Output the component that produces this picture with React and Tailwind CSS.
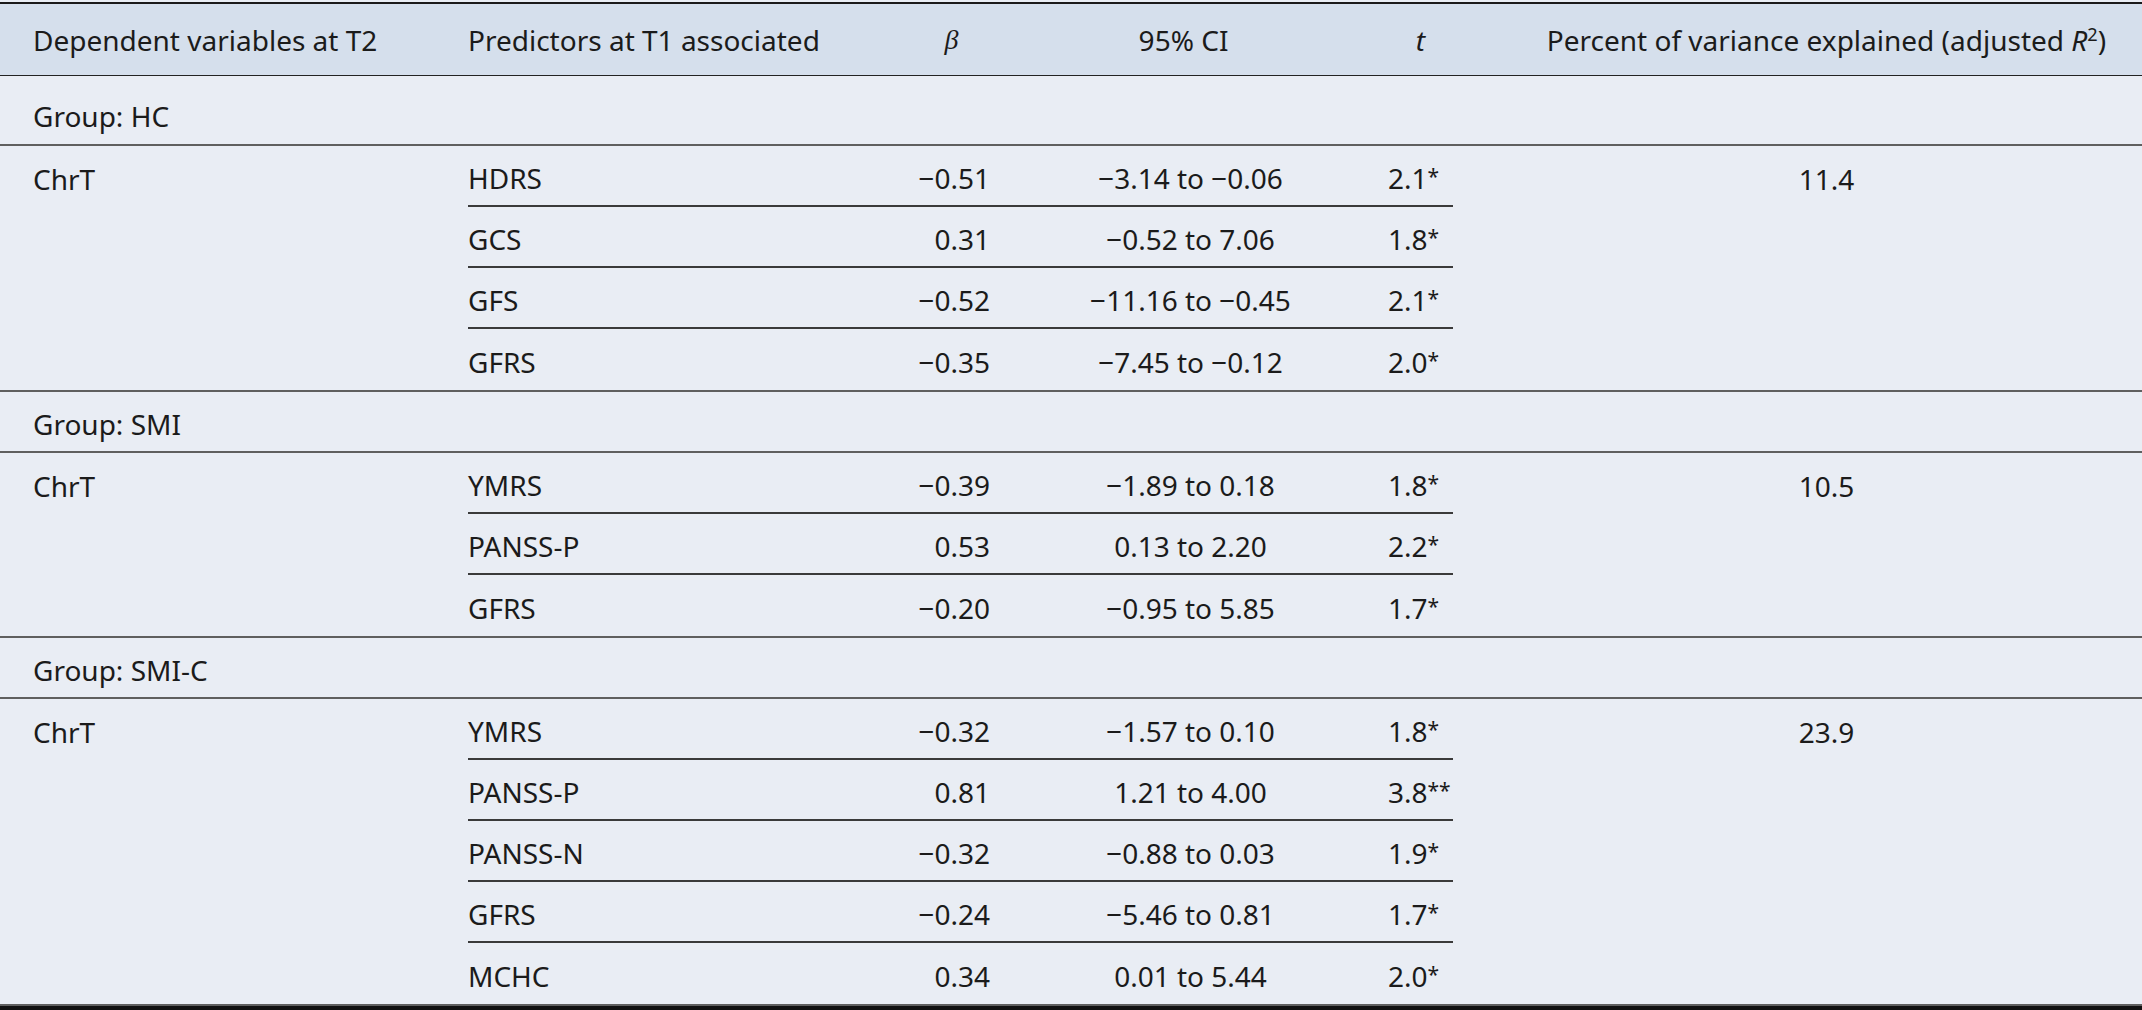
const groups = [
  {
    name: 'HC',
    variable: 'ChrT',
    variance: '11.4',
    rows: [
      { predictor: 'HDRS', beta: '\u22120.51', ci: '\u22123.14 to \u22120.06', t: '2.1', sig: '*' },
      { predictor: 'GCS', beta: '0.31', ci: '\u22120.52 to 7.06', t: '1.8', sig: '*' },
      { predictor: 'GFS', beta: '\u22120.52', ci: '\u221211.16 to \u22120.45', t: '2.1', sig: '*' },
      { predictor: 'GFRS', beta: '\u22120.35', ci: '\u22127.45 to \u22120.12', t: '2.0', sig: '*' },
    ],
  },
  {
    name: 'SMI',
    variable: 'ChrT',
    variance: '10.5',
    rows: [
      { predictor: 'YMRS', beta: '\u22120.39', ci: '\u22121.89 to 0.18', t: '1.8', sig: '*' },
      { predictor: 'PANSS-P', beta: '0.53', ci: '0.13 to 2.20', t: '2.2', sig: '*' },
      { predictor: 'GFRS', beta: '\u22120.20', ci: '\u22120.95 to 5.85', t: '1.7', sig: '*' },
    ],
  },
  {
    name: 'SMI-C',
    variable: 'ChrT',
    variance: '23.9',
    rows: [
      { predictor: 'YMRS', beta: '\u22120.32', ci: '\u22121.57 to 0.10', t: '1.8', sig: '*' },
      { predictor: 'PANSS-P', beta: '0.81', ci: '1.21 to 4.00', t: '3.8', sig: '**' },
      { predictor: 'PANSS-N', beta: '\u22120.32', ci: '\u22120.88 to 0.03', t: '1.9', sig: '*' },
      { predictor: 'GFRS', beta: '\u22120.24', ci: '\u22125.46 to 0.81', t: '1.7', sig: '*' },
      { predictor: 'MCHC', beta: '0.34', ci: '0.01 to 5.44', t: '2.0', sig: '*' },
    ],
  },
];

function PredictorRow({ row, last }) {
  return (
    <div className={`flex h-[61px] items-center pt-[4px] ${last ? '' : 'border-b-2 border-[#3a3a3a]'}`}>
      <div className="w-[445px]">{row.predictor}</div>
      <div className="w-[170px] pr-[93px] text-right">{row.beta}</div>
      <div className="w-[305px] pr-[90px] text-center">{row.ci}</div>
      <div className="w-[65px] whitespace-nowrap">
        {row.t}
        <span className="relative top-[-5px] text-[0.75em]">{row.sig}</span>
      </div>
    </div>
  );
}

function GroupBlock({ group, first }) {
  return (
    <>
      <div
        className={`flex items-center border-b-2 border-[#5f5f5f] pl-[33px] ${first ? 'h-[70px] pt-[12px]' : 'h-[61px] pt-[4px]'}`}
      >
        Group: {group.name}
      </div>
      <div className="flex border-b-2 border-[#5f5f5f]">
        <div className="w-[468px] shrink-0 pl-[33px]">
          <div className="flex h-[61px] items-center pt-[4px]">{group.variable}</div>
        </div>
        <div className="w-[985px] shrink-0">
          {group.rows.map((row, i) => (
            <PredictorRow key={row.predictor + i} row={row} last={i === group.rows.length - 1} />
          ))}
        </div>
        <div className="flex-1 pl-[93px] pr-[35px]">
          <div className="flex h-[61px] items-center justify-center pt-[4px]">{group.variance}</div>
        </div>
      </div>
    </>
  );
}

export default function App() {
  return (
    <div
      className="h-[1010px] w-[2142px] overflow-hidden bg-[#e9edf4] pt-[2px] text-[28px] leading-none text-[#1b1b1b]"
      style={{ fontFamily: '"Noto Sans", sans-serif' }}
    >
      <div className="border-t-2 border-b-[4px] border-t-[#1a1a1a] border-b-[#111]">
        {/* header */}
        <div className="flex h-[72px] items-center border-b border-[#222] bg-[#d5dfec]">
          <div className="w-[468px] pl-[33px]">Dependent variables at T2</div>
          <div className="w-[445px]">Predictors at T1 associated</div>
          <div className="w-[170px] pr-[93px] text-center italic" style={{ fontFamily: '"Liberation Serif", serif' }}>
            β
          </div>
          <div className="w-[305px] pr-[104px] text-center">95% CI</div>
          <div className="w-[65px] text-center italic">t</div>
          <div className="flex-1 pl-[93px] pr-[35px] text-center whitespace-nowrap">
            Percent of variance explained (adjusted <span className="italic">R</span>
            <sup className="text-[0.65em]">2</sup>)
          </div>
        </div>
        {groups.map((group, i) => (
          <GroupBlock key={group.name} group={group} first={i === 0} />
        ))}
      </div>
    </div>
  );
}
